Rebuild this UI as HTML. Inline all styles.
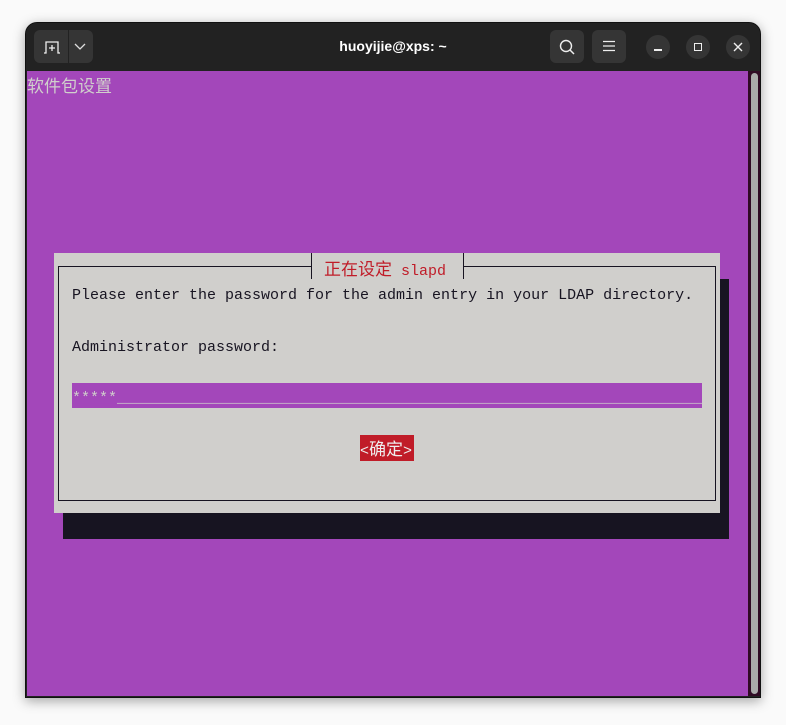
<!DOCTYPE html><html><head><meta charset="utf-8"><style>
*{margin:0;padding:0;box-sizing:border-box}
body{width:786px;height:725px;background:#fafafa;position:relative;overflow:hidden;font-family:"Liberation Mono","Noto Sans CJK SC",monospace}
.win{position:absolute;left:25px;top:22px;width:736px;height:676px;background:#222;border-radius:12px 12px 0 0;box-shadow:0 3px 12px rgba(0,0,0,.35);overflow:hidden;border:1px solid #111}
.tb{position:absolute;left:0;top:0;width:100%;height:48px;background:#222}
.btn{position:absolute;top:7px;height:33px;background:#353535;border-radius:6px}
.circ{position:absolute;top:12px;width:24px;height:24px;border-radius:50%;background:#353535}
.title{position:absolute;left:0;right:0;top:15px;text-align:center;color:#fff;font:bold 14px "Liberation Sans",sans-serif}
.term{position:absolute;left:1px;top:48px;width:721px;height:625px;background:#a347ba}
.sb{position:absolute;left:722px;top:48px;width:13px;height:625px;background:#300a24}
.sb div{position:absolute;left:3px;top:2px;width:7px;height:621px;background:#aaa;border-radius:4px}
.abs{position:absolute}
.t{font-size:15px;line-height:26px;white-space:pre;color:#171421}
.cjk{font-family:"Noto Sans CJK SC",sans-serif;font-size:17px}
</style></head><body>
<div class="win">
<div class="tb">
 <div class="btn" style="left:8px;width:59px"></div>
 <div class="abs" style="left:42px;top:7px;width:1px;height:33px;background:#222"></div>
 <svg class="abs" style="left:16px;top:16px" width="20" height="16"><path d="M2 14 L4 14 L4 3 L16 3 L16 14 L18 14 M10 6 V12 M7 9 H13" stroke="#eee" stroke-width="1.3" fill="none"/></svg>
 <svg class="abs" style="left:48px;top:19px" width="12" height="10"><path d="M1 2 L6 7 L11 2" stroke="#ddd" stroke-width="1.3" fill="none"/></svg>
 <div class="title">huoyijie@xps: ~</div>
 <div class="btn" style="left:524px;width:34px"></div>
 <svg class="abs" style="left:532px;top:15px" width="18" height="18"><circle cx="8" cy="8" r="5.5" stroke="#eee" stroke-width="1.4" fill="none"/><path d="M12 12 L16 16" stroke="#eee" stroke-width="1.5"/></svg>
 <div class="btn" style="left:566px;width:34px"></div>
 <svg class="abs" style="left:576px;top:16px" width="14" height="14"><path d="M1 2.5H13M1 7H13M1 11.5H13" stroke="#eee" stroke-width="1.3"/></svg>
 <div class="circ" style="left:620px"></div>
 <div class="abs" style="left:628px;top:26px;width:8px;height:1.5px;background:#eee"></div>
 <div class="circ" style="left:660px"></div>
 <div class="abs" style="left:668px;top:20px;width:8px;height:8px;border:1.4px solid #eee"></div>
 <div class="circ" style="left:700px"></div>
 <svg class="abs" style="left:707px;top:19px" width="10" height="10"><path d="M1 1L9 9M9 1L1 9" stroke="#eee" stroke-width="1.4"/></svg>
</div>
<div class="term"></div>
<div class="sb"><div></div></div>
</div>
<div class="abs" style="left:27px;top:72px;color:#d0cfcc;font:17px 'Noto Sans CJK SC',sans-serif;line-height:26px">软件包设置</div>
<div class="abs" style="left:63px;top:279px;width:666px;height:260px;background:#171421"></div>
<div class="abs" style="left:54px;top:253px;width:666px;height:260px;background:#d0cfcc"></div>
<div class="abs" style="left:58px;top:266px;width:658px;height:235px;border:1px solid #171421"></div>
<div class="abs" style="left:311px;top:253px;width:153px;height:26px;background:#d0cfcc;border-left:1px solid #171421;border-right:1px solid #171421"></div>
<div class="abs t" style="left:324px;top:255px;color:#c01c28"><span class="cjk">正在设定</span> slapd</div>
<div class="abs t" style="left:72px;top:283px">Please enter the password for the admin entry in your LDAP directory.</div>
<div class="abs t" style="left:72px;top:335px">Administrator password:</div>
<div class="abs" style="left:72px;top:383px;width:630px;height:25px;background:#a347ba"></div>
<div class="abs t" style="left:72px;top:386px;color:#d0cfcc;width:630px;overflow:hidden">*****______________________________________________________________________</div>
<div class="abs" style="left:360px;top:435px;width:54px;height:26px;background:#c01c28"></div>
<div class="abs t" style="left:360px;top:435px;color:#eee">&lt;<span class="cjk">确定</span>&gt;</div>
</body></html>
